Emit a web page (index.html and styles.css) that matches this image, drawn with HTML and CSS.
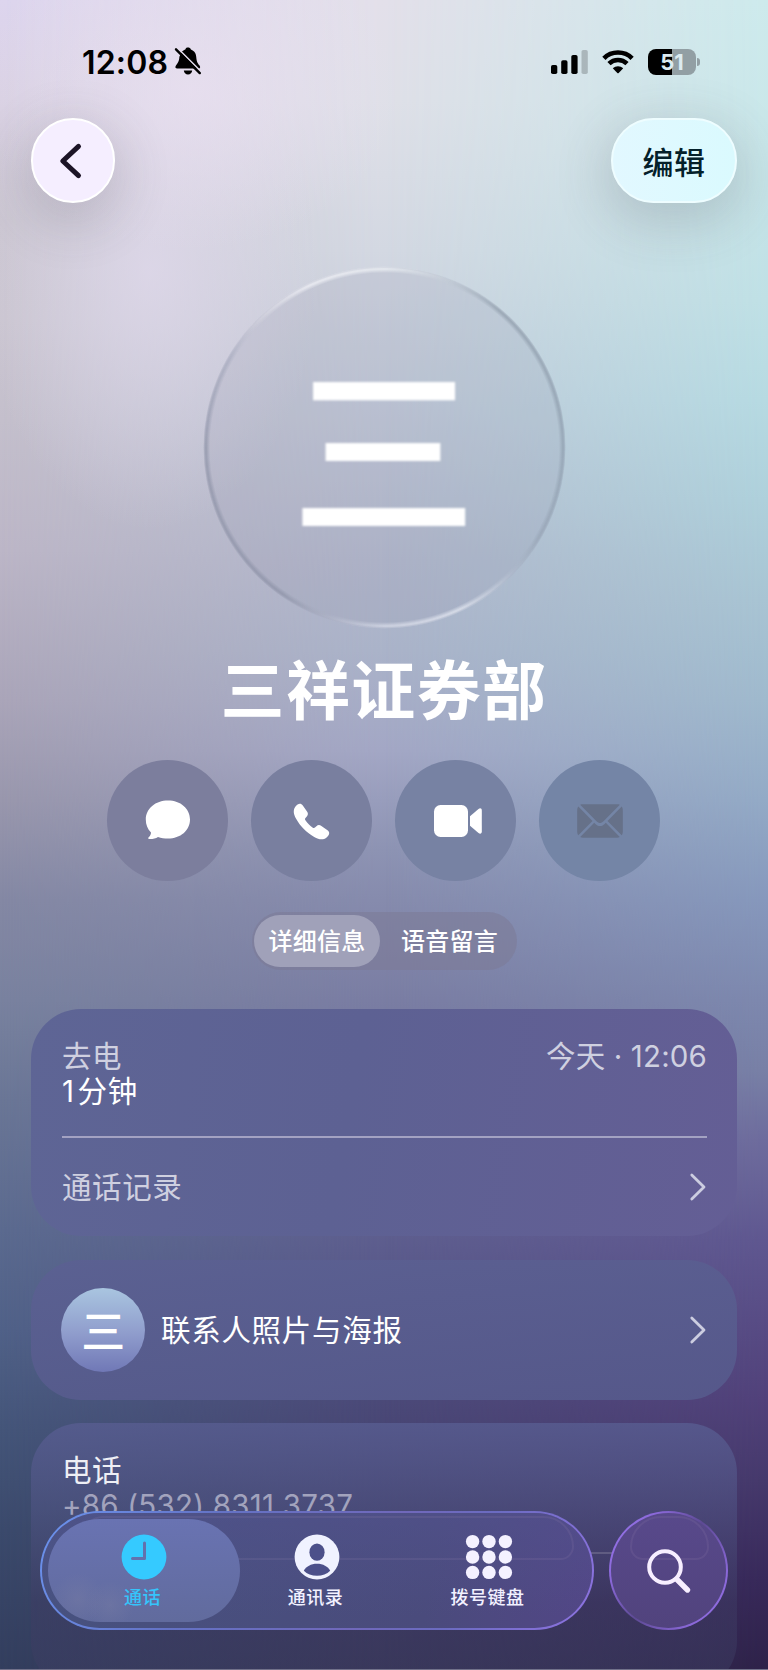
FILE: index.html
```html
<!DOCTYPE html>
<html lang="zh-CN">
<head>
    <meta charset="UTF-8">
    <meta name="viewport" content="width=device-width, initial-scale=1.0">
    <title>三祥证券部</title>
    <link rel="stylesheet" href="styles.css">
</head>
<body>
    <div class="screen">
        <div class="bg bg-left"></div>
        <div class="bg bg-middle"></div>
        <div class="bg bg-right"></div>
        <div class="bg bg-glow"></div>

        <main class="content">
            <div class="status-bar">
                <div class="status-left">
                    <span class="time">12:08</span>
                    <svg class="bell" width="28" height="30" viewBox="0 0 28 30">
                        <path d="M8 4.500C9.500 3.300 10.500 3 11.300 2.500C11.800 .8 12.900 .6 14 .6C15.300 .6 16.400 1.200 16.900 2.500C20.900 4 22.100 7 22.300 10.500C22.600 15 24.200 17 25.700 18.800C26.500 20 26.200 21.600 25 21.600H3.200C1.600 21.600 .9 20.300 1.700 19C3.300 16.500 5.200 15 5.400 9.800Z" />
                        <path d="M9.800 23.600H18.200C18 26 16.400 27.500 14 27.500C11.600 27.500 10 26 9.800 23.600Z" />
                        <path class="bell-gap" d="M3.500 1L28 25.500" />
                        <path class="bell-slash" d="M2 2.300L25.800 26.100" />
                    </svg>
                </div>
                <div class="status-right">
                    <svg width="37" height="24" viewBox="0 0 37 24">
                        <rect x="0" y="15" width="6.300" height="9" rx="1.800" />
                        <rect x="10.200" y="10.300" width="6.300" height="13.700" rx="1.800" />
                        <rect x="20.300" y="5" width="6.300" height="19" rx="1.800" />
                        <rect x="30.500" y="0" width="6.300" height="24" rx="1.800" opacity=".2" />
                    </svg>
                    <svg class="wifi" width="32" height="24" viewBox="0 0 32 24">
                        <path d="M1.900 8.300C9.500 .6 22.500 .6 30.100 8.300" />
                        <path d="M7 13.600C12 8.800 20 8.800 25 13.600" />
                        <path class="wifi-dot" d="M10.800 18.200C13.700 15.500 18.300 15.500 21.200 18.200L16.700 23C16.300 23.400 15.700 23.400 15.300 23Z" />
                    </svg>
                    <div class="battery"><span>51</span></div>
                </div>
            </div>

            <header class="top-nav">
                <button class="glass-btn back-btn" aria-label="返回">
                    <svg width="22" height="36" viewBox="0 0 22 36">
                        <path d="M19.500 3.400L3.800 18L19.500 32.600" />
                    </svg>
                </button>
                <button class="glass-btn edit-btn">编辑</button>
            </header>

            <section class="profile">
                <div class="avatar"><span>三</span></div>
                <h1>三祥证券部</h1>
                <div class="actions">
                    <button class="action action-message" aria-label="信息">
                        <svg width="46" height="40" viewBox="0 0 46 40">
                            <path d="M23 -.5C35.500 -.5 45 7.500 45 18.500C45 29.500 35.500 37.500 23 37.500C19.500 37.500 16.200 37 13 35.900C10.500 37.500 7 38.200 4 37.900C3 37.800 3 36.800 3.700 36.200C5.200 34.800 6 33.200 6 31.400C2.500 28 .8 23.500 .8 18.500C.8 7.500 10.500 -.5 23 -.5Z" />
                        </svg>
                    </button>
                    <button class="action action-call" aria-label="呼叫">
                        <svg width="38" height="38" viewBox="0 0 38 38">
                            <path d="M2.300 4.700C4.800 1.500 7.800 .7 9.800 3.500L14 9.600C15.300 11.500 15.200 13 13.800 14.600L12.500 16C11.800 16.800 11.900 17.500 12.600 18.500C14.500 21.200 16.800 23.500 19.500 25.400C20.500 26.100 21.200 26.200 22 25.500L23.400 24.200C25 22.800 26.500 22.700 28.400 24L34.500 28.200C37.300 30.200 36.500 33.200 33.300 35.700C30.300 38 26 37.700 21.200 34.900C12.700 30 7.500 24.500 3.100 16.800C.4 12 0 7.700 2.300 4.700Z" />
                        </svg>
                    </button>
                    <button class="action action-video" aria-label="视频">
                        <svg width="48" height="34" viewBox="0 0 48 34">
                            <rect x="0" y="1" width="34" height="32" rx="6.500" />
                            <path d="M36 12.300L44.500 5C46.200 3.700 47.800 4.300 47.800 6.500V27.500C47.800 29.700 46.200 30.300 44.500 29L36 21.700Z" />
                        </svg>
                    </button>
                    <button class="action action-mail" aria-label="邮件" disabled>
                        <svg width="46" height="34" viewBox="0 0 46 34">
                            <path d="M3.200 .8C4 .4 5 .3 6 .3H40C41 .3 42 .4 42.800 .8L26.500 17.200C24 19.600 22 19.600 19.500 17.200Z" />
                            <path d="M1.300 2.600L15.500 17L1.300 31.300C.5 30.300 .2 29 .2 27.500V6.400C.2 4.900 .5 3.500 1.300 2.600Z" />
                            <path d="M44.700 2.600L30.500 17L44.700 31.300C45.500 30.300 45.800 29 45.800 27.500V6.400C45.800 4.900 45.500 3.500 44.700 2.600Z" />
                            <path d="M3.200 33L17.200 18.800L18.700 20.200C21.500 22.700 24.500 22.700 27.300 20.200L28.800 18.800L42.800 33C42 33.500 41 33.700 40 33.700H6C5 33.700 4 33.500 3.200 33Z" />
                        </svg>
                    </button>
                </div>
                <div class="segments">
                    <button class="segment selected">详细信息</button>
                    <button class="segment">语音留言</button>
                </div>
            </section>

            <section class="card card-calls">
                <div class="call-row">
                    <div>
                        <p class="muted">去电</p>
                        <p class="duration"><span>1</span>分钟</p>
                    </div>
                    <p class="muted">今天 · 12:06</p>
                </div>
                <div class="link-row muted">
                    <span>通话记录</span>
                    <svg class="chevron" width="16" height="28" viewBox="0 0 16 28">
                        <path d="M1.800 2L14 14L1.800 26" />
                    </svg>
                </div>
            </section>

            <section class="card card-poster">
                <div class="small-avatar"><span>三</span></div>
                <span class="poster-label">联系人照片与海报</span>
                <svg class="chevron" width="16" height="28" viewBox="0 0 16 28">
                    <path d="M1.800 2L14 14L1.800 26" />
                </svg>
            </section>

            <section class="card card-phone">
                <div class="phone-row">
                    <p class="phone-label">电话</p>
                    <p class="phone-number">+86 (532) 8311 3737</p>
                </div>
            </section>
        </main>

        <nav class="bottom-nav">
            <div class="tab-bar glass-dark">
                <a class="tab active">
                    <svg width="46" height="46" viewBox="0 0 46 46">
                        <circle cx="23" cy="23" r="22.400" fill="#35caff" />
                        <path d="M23.500 9V24.500H11.500" fill="none" stroke="#6371ad" stroke-width="3" stroke-linecap="round" stroke-linejoin="round" />
                    </svg>
                    <span>通话</span>
                </a>
                <a class="tab">
                    <svg width="46" height="46" viewBox="0 0 46 46">
                        <circle cx="23" cy="23" r="22.400" fill="#f0f2ff" />
                        <ellipse cx="23" cy="18.200" rx="7.600" ry="8.600" fill="#4c508a" />
                        <path d="M9.800 36.800C12 32.500 17 29.800 23 29.800C29 29.800 34 32.500 36.200 36.800C33 40 28.200 41.800 23 41.800C17.800 41.800 13 40 9.800 36.800Z" fill="#4c508a" />
                    </svg>
                    <span>通讯录</span>
                </a>
                <a class="tab">
                    <svg width="46" height="46" viewBox="0 0 46 46" fill="#f4f1ff">
                        <circle cx="6.600" cy="7.600" r="6.700" />
                        <circle cx="23" cy="7.600" r="6.700" />
                        <circle cx="39.400" cy="7.600" r="6.700" />
                        <circle cx="6.600" cy="23" r="6.700" />
                        <circle cx="23" cy="23" r="6.700" />
                        <circle cx="39.400" cy="23" r="6.700" />
                        <circle cx="6.600" cy="38.400" r="6.700" />
                        <circle cx="23" cy="38.400" r="6.700" />
                        <circle cx="39.400" cy="38.400" r="6.700" />
                    </svg>
                    <span>拨号键盘</span>
                </a>
            </div>
            <button class="search-btn glass-dark" aria-label="搜索">
                <svg width="46" height="46" viewBox="0 0 46 46">
                    <circle cx="19" cy="19" r="15.800" />
                    <path class="handle" d="M31 31.500L41.500 42" />
                </svg>
            </button>
        </nav>
    </div>
</body>
</html>
```
FILE: styles.css
```css
* {
    box-sizing: border-box;
}

body {
    margin: 0;
    font-family: Inter, "Noto Sans CJK SC", sans-serif;
    font-size: 29.5px;
    color: #fff;
}

h1, p {
    margin: 0;
}

button {
    border: none;
    padding: 0;
    font-family: inherit;
    color: inherit;
}

svg {
    display: block;
    flex: none;
    overflow: visible;
}

.screen {
    position: relative;
    width: 768px;
    height: 1670px;
    overflow: hidden;
    border-bottom: 1px solid #72718a;
}

/* Background: three vertical ramps blended sideways */
.bg {
    position: absolute;
    inset: 0;
}

.bg-left {
    background: linear-gradient(180deg, #ddd5ee 0, #d9d1e3 100px, #cbc6d1 220px, #cac5d0 320px, #c4bfcc 420px, #bcb6c7 550px, #aaa5b9 700px, #9997ad 800px, #8488a4 900px, #79829f 1000px, #6a7696 1100px, #5b6a8f 1230px, #506188 1330px, #445579 1430px, #3b4a6c 1530px, #333e5e 1670px);
}

.bg-middle {
    background: linear-gradient(180deg, #e3e0ea 0, #dfe0e8 100px, #d3d8e2 250px, #c2cad9 400px, #b2b8cc 560px, #aab3c9 650px, #a3a7c5 750px, #8d93b3 850px, #868bad 900px, #7a7da3 1000px, #6c6f99 1120px, #5c5c8d 1250px, #4a4877 1410px, #403e69 1510px, #363254 1670px);
    -webkit-mask-image: linear-gradient(90deg, transparent 0, #000 50%);
    mask-image: linear-gradient(90deg, transparent 0, #000 50%);
}

.bg-right {
    background: linear-gradient(180deg, #cdeaec 0, #c8e6e9 150px, #bfe0e5 300px, #b6dae2 400px, #aed0db 500px, #a8c4d3 600px, #9fb9cd 700px, #93aac6 800px, #8698bc 900px, #7d88ae 1000px, #7880a6 1070px, #6e6c9d 1140px, #5f5790 1240px, #51417a 1400px, #46396c 1480px, #38295a 1580px, #2e2249 1670px);
    -webkit-mask-image: linear-gradient(90deg, transparent 50%, #000 100%);
    mask-image: linear-gradient(90deg, transparent 50%, #000 100%);
}

.bg-glow {
    background:
        radial-gradient(ellipse 210px 160px at 190px 90px, rgba(234, 224, 241, 0.7), rgba(234, 224, 241, 0)),
        radial-gradient(ellipse 170px 260px at 150px 270px, rgba(224, 217, 236, 0.75), rgba(224, 217, 236, 0));
}

.content {
    position: relative;
    padding: 0 31px;
}

/* Status bar */
.status-bar {
    display: flex;
    justify-content: space-between;
    align-items: center;
    height: 118px;
    padding: 6px 41px 0 51px;
    color: #000;
}

.status-left,
.status-right {
    display: flex;
    align-items: center;
}

.time {
    font-size: 32px;
    font-weight: 600;
    letter-spacing: 0.2px;
}

.bell {
    margin-left: 6px;
}

.bell-gap {
    stroke: #e6dfee;
    stroke-width: 1.6;
}

.bell-slash {
    stroke: #000;
    stroke-width: 2.4;
    stroke-linecap: round;
}

.wifi {
    margin: 0 14px 0 14px;
    fill: none;
    stroke: #000;
    stroke-width: 4.6;
}

.wifi .wifi-dot {
    fill: #000;
    stroke: none;
}

.battery {
    position: relative;
    width: 48px;
    height: 26px;
    border-radius: 8px;
    background: linear-gradient(90deg, #000 50%, #929fa4 50%);
    color: #dcebf0;
    font-size: 22px;
    font-weight: 700;
    line-height: 27px;
    text-align: center;
}

.battery::after {
    content: "";
    position: absolute;
    right: -4px;
    top: 9px;
    width: 3px;
    height: 8px;
    border-radius: 0 4px 4px 0;
    background: #929fa4;
}

/* Navigation */
.top-nav {
    display: flex;
    justify-content: space-between;
}

.glass-btn {
    display: flex;
    justify-content: center;
    align-items: center;
    height: 85px;
    border-radius: 43px;
    border: 2px solid #fff;
    box-shadow: 0 14px 50px 8px rgba(70, 70, 80, 0.19);
}

.back-btn {
    width: 84px;
    background: #f5eeff;
}

.back-btn svg {
    margin-right: 7px;
    fill: none;
    stroke: #1c1426;
    stroke-width: 5;
    stroke-linecap: round;
    stroke-linejoin: round;
}

.edit-btn {
    width: 126px;
    border-color: #eefdff;
    background: linear-gradient(90deg, #e2f8ff, #dafafe);
    color: #04202a;
    font-size: 31px;
    font-weight: 500;
    letter-spacing: 0.5px;
}

/* Profile */
.profile {
    display: flex;
    flex-direction: column;
    align-items: center;
}

.avatar {
    position: relative;
    display: flex;
    justify-content: center;
    align-items: center;
    width: 361px;
    height: 361px;
    margin-top: 64px;
    border-radius: 50%;
    background: rgba(140, 145, 165, 0.16);
}

.avatar::before {
    content: "";
    position: absolute;
    inset: -1px;
    border-radius: 50%;
    background: conic-gradient(from 0deg, rgba(228, 232, 238, 0.9) 0deg, rgba(190, 200, 210, 0.4) 22deg, rgba(145, 158, 172, 0.7) 40deg, rgba(145, 161, 177, 0.7) 90deg, rgba(150, 163, 180, 0.65) 120deg, rgba(190, 200, 215, 0.2) 134deg, rgba(218, 223, 234, 0.85) 155deg, rgba(210, 214, 228, 0.8) 180deg, rgba(190, 195, 210, 0.2) 198deg, rgba(140, 145, 166, 0.65) 215deg, rgba(145, 150, 170, 0.7) 270deg, rgba(160, 165, 185, 0.5) 300deg, rgba(215, 215, 225, 0.4) 315deg, rgba(232, 233, 240, 0.9) 335deg, rgba(228, 232, 238, 0.9) 360deg);
    -webkit-mask-image: radial-gradient(circle closest-side, transparent 174.5px, #000 178px, #000 179px, transparent 181.5px);
    mask-image: radial-gradient(circle closest-side, transparent 174.5px, #000 178px, #000 179px, transparent 181.5px);
}

.avatar span {
    margin-top: 16px;
    font-size: 187px;
    font-weight: 500;
    line-height: 1;
    filter: blur(1px);
}

h1 {
    margin-top: 15px;
    font-size: 64px;
    font-weight: 700;
    line-height: 96px;
    letter-spacing: 1.4px;
}

.actions {
    display: flex;
    gap: 23px;
    margin: 21px 0 0 -1px;
}

.action {
    display: flex;
    justify-content: center;
    align-items: center;
    width: 121px;
    height: 121px;
    border-radius: 50%;
}

.action svg {
    fill: #fff;
}

.action-message {
    background: #7c7e9d;
}

.action-call {
    background: #797f9f;
}

.action-video {
    background: #7782a3;
}

.action-video svg {
    margin-left: 5px;
}

.action-mail {
    background: #7485a6;
}

.action-mail svg {
    fill: #667189;
}

.segments {
    display: flex;
    width: 265px;
    height: 58px;
    margin-top: 31px;
    padding: 3px 3px 3px 2px;
    border-radius: 29px;
    background: rgba(124, 122, 150, 0.55);
}

.segment {
    flex: 1;
    padding: 0 0 3px 6px;
    border-radius: 26px;
    background: none;
    font-size: 24px;
    font-weight: 500;
    letter-spacing: 0.3px;
}

.segment.selected {
    flex: 0 0 126px;
    padding-left: 1px;
    background: #a0a1b9;
}

/* Cards */
.card {
    border-radius: 50px;
    padding: 0 30px 0 31px;
    line-height: 35px;
    letter-spacing: 0.6px;
}

.card-calls {
    height: 227px;
    margin-top: 39px;
    background: linear-gradient(100deg, #5e6595 0, #5d6193 45%, #645e95 100%);
}

.call-row {
    display: flex;
    justify-content: space-between;
    height: 129px;
    padding-top: 30px;
    border-bottom: 2px solid #a3a2c2;
}

.call-row > .muted {
    letter-spacing: 0.15px;
}

.duration span {
    margin-right: 3px;
}

.link-row {
    display: flex;
    justify-content: space-between;
    align-items: center;
    height: 98px;
}

.muted {
    color: #cfd0e0;
}

.chevron {
    margin-right: 1px;
    fill: none;
    stroke: #cccde0;
    stroke-width: 2.8;
    stroke-linecap: round;
    stroke-linejoin: round;
}

.card-poster {
    display: flex;
    align-items: center;
    height: 140px;
    margin-top: 24px;
    padding-left: 30px;
    background: linear-gradient(175deg, rgba(91, 96, 146, 0.9), rgba(86, 90, 140, 0.9));
}

.small-avatar {
    display: flex;
    justify-content: center;
    align-items: center;
    width: 84px;
    height: 84px;
    border-radius: 50%;
    background: linear-gradient(180deg, #a9c5e0, #8f9ccc 55%, #7078b6);
}

.small-avatar span {
    margin: 3px 0 0 1px;
    font-size: 44px;
    font-weight: 500;
    line-height: 1;
}

.poster-label {
    flex: 1;
    margin-left: 16px;
    letter-spacing: 0.7px;
}

.card-phone {
    height: 268px;
    margin-top: 23px;
    background: linear-gradient(180deg, rgba(88, 93, 145, 0.8), rgba(80, 84, 132, 0.55) 90px, rgba(62, 60, 100, 0.5) 180px, rgba(60, 62, 98, 0.5));
}

.phone-row {
    height: 131px;
    padding-top: 30px;
    border-bottom: 2px solid #605c82;
}

.phone-label {
    color: #eeeff5;
}

.phone-number {
    color: #a2a3bd;
    letter-spacing: 0.25px;
}

/* Bottom navigation */
.bottom-nav {
    position: absolute;
    left: 40px;
    top: 1511px;
    display: flex;
    gap: 15px;
}

.glass-dark {
    position: relative;
    height: 119px;
    border: 2px solid transparent;
    border-radius: 60px;
}

.tab-bar {
    display: flex;
    width: 554px;
    padding: 6px;
    background:
        linear-gradient(180deg, rgba(84, 84, 146, 0.5), rgba(72, 78, 122, 0) 90%) padding-box,
        linear-gradient(100deg, #47527f, #4a4b7c 70%, #524686) padding-box,
        linear-gradient(115deg, #6b93ee, #6472c4 30%, #7068ba 60%, #6b6bc0 75%, #8f73e2) border-box;
}

.search-btn {
    display: flex;
    justify-content: center;
    align-items: center;
    width: 119px;
    background:
        linear-gradient(180deg, #58498b, #51437d) padding-box,
        linear-gradient(125deg, #9a78f0, #8a68d8 25%, #5d4a94 50%, #8a68d8 80%, #9673ea) border-box;
}

/* Faint reflection along the top of the glass */
.glass-dark::before {
    content: "";
    position: absolute;
    top: 3px;
    height: 40px;
    border: 2px solid rgba(150, 130, 175, 0.16);
    filter: blur(0.6px);
}

.tab-bar::before {
    left: 40px;
    right: 18px;
    border-radius: 22px 32px 14px 22px;
}

.search-btn::before {
    left: 19px;
    right: 17px;
    border-radius: 38px 38px 16px 16px;
}

.search-btn svg {
    position: relative;
    fill: none;
    stroke: #f7eeff;
    stroke-width: 4;
    stroke-linecap: round;
}

.search-btn .handle {
    stroke-width: 5.4;
}

.tab {
    position: relative;
    display: flex;
    flex-direction: column;
    align-items: center;
    width: 172px;
    padding-top: 15px;
    border-radius: 52px;
    color: #f2f1ff;
    font-size: 18px;
    font-weight: 500;
    line-height: 26px;
    letter-spacing: 0.5px;
}

.tab span {
    margin: 5px 3px 0 0;
}

.tab.active {
    width: 192px;
    margin-right: -9px;
    background:
        radial-gradient(circle 26px at 30px 80px, rgba(125, 128, 165, 0.35), rgba(125, 128, 165, 0)),
        radial-gradient(circle 24px at 62px 86px, rgba(125, 128, 165, 0.35), rgba(125, 128, 165, 0)),
        linear-gradient(180deg, #6973b2, #616b9d);
    color: #35c4fb;
}
```
